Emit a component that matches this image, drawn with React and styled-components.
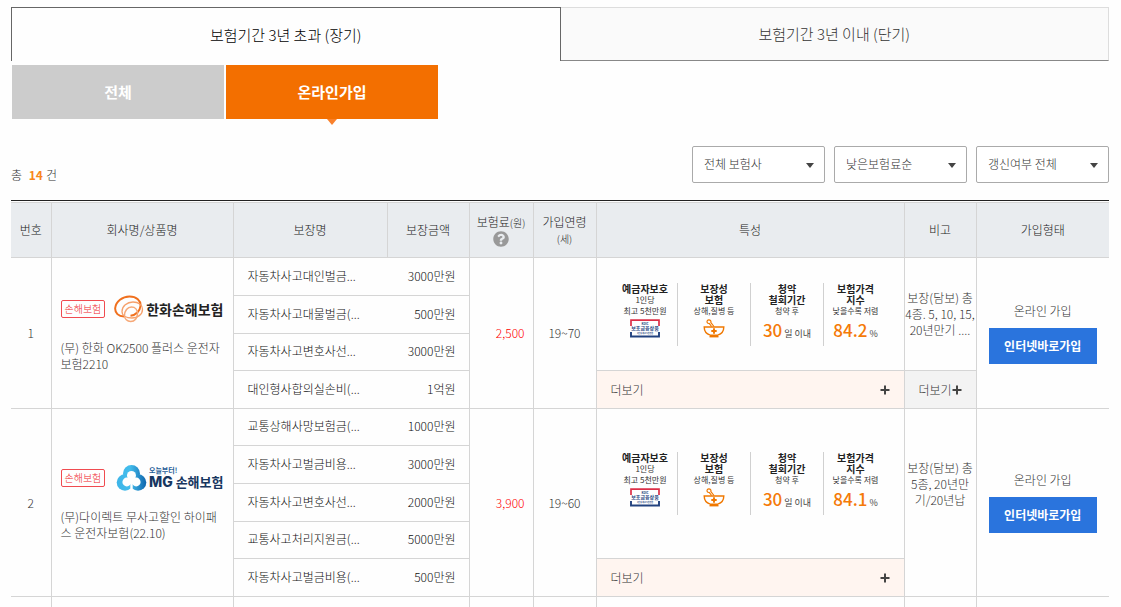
import React from "react";
import styled, { createGlobalStyle } from "styled-components";
import { FaQuestionCircle } from "react-icons/fa";

const products = [
  {
    no: 1,
    logo: "hanwha",
    name: "(무) 한화 OK2500 플러스 운전자보험2210",
    coverages: [
      ["자동차사고대인벌금...", "3000만원"],
      ["자동차사고대물벌금(...", "500만원"],
      ["자동차사고변호사선...", "3000만원"],
      ["대인형사합의실손비(...", "1억원"],
    ],
    price: "2,500",
    age: "19~70",
    index: "84.2",
    note: "보장(담보) 총\n4종. 5, 10, 15,\n20년만기 ....",
    noteMore: true,
  },
  {
    no: 2,
    logo: "mg",
    name: "(무)다이렉트 무사고할인 하이패스 운전자보험(22.10)",
    coverages: [
      ["교통상해사망보험금(...", "1000만원"],
      ["자동차사고벌금비용...", "3000만원"],
      ["자동차사고변호사선...", "2000만원"],
      ["교통사고처리지원금(...", "5000만원"],
      ["자동차사고벌금비용(...", "500만원"],
    ],
    price: "3,900",
    age: "19~60",
    index: "84.1",
    note: "보장(담보) 총\n5종, 20년만\n기/20년납",
    noteMore: false,
  },
];

const filters = [
  { label: "보험사", value: "전체 보험사" },
  { label: "정렬", value: "낮은보험료순" },
  { label: "갱신여부", value: "갱신여부 전체" },
];

const HanwhaLogo = () => (
  <Logo>
    <svg width="30" height="28" viewBox="0 0 30 28" fill="none">
      <path
        d="M10 21.500C4.500 21.500.8 18 1.200 13 1.800 6.500 8.500 1.500 15.500 1.500 22.500 1.500 27 5.500 26.500 11c-.5 5-4.500 9-10 9.800"
        stroke="#f0701e"
        strokeWidth="2"
      />
      <path
        d="M8 16.500C8 11 13 7 19 7c5.500 0 9.500 3 9.500 7.500 0 5-5 8.500-10.500 8.500C12 23 8 20.500 8 16.500z"
        stroke="#f6a06a"
        strokeWidth="1.300"
      />
      <path
        d="M10.500 20.500c0-4.500 3-8.500 7-8.500 3.800 0 6 3 6 6.500 0 4.500-2.800 8-6.800 8-3.500 0-6.200-2.500-6.200-6z"
        stroke="#f6a877"
        strokeWidth="1.500"
      />
    </svg>
    <LogoName>한화손해보험</LogoName>
  </Logo>
);

const MgLogo = () => (
  <Logo>
    <svg width="31" height="28" viewBox="0 0 31 28">
      <defs>
        <linearGradient id="mg" x1="0" y1="0" x2="31" y2="0" gradientUnits="userSpaceOnUse">
          <stop offset="0" stopColor="#3db4e8" />
          <stop offset="0.450" stopColor="#43bdec" />
          <stop offset="1" stopColor="#0c62ab" />
        </linearGradient>
      </defs>
      <g fill="url(#mg)">
        <circle cx="15.500" cy="9.500" r="8.500" />
        <circle cx="9" cy="18.500" r="8.300" />
        <circle cx="22" cy="18.500" r="8.300" />
      </g>
      <g fill="#fefefe">
        <circle cx="15.500" cy="11.500" r="4.500" />
        <circle cx="10.800" cy="18" r="4.400" />
        <circle cx="20.200" cy="18" r="4.400" />
        <path d="M12 13h7v7h-7z" />
        <path d="M14.300 18h2.400v10h-2.400z" />
      </g>
    </svg>
    <MgName>
      <small>오늘부터!</small>
      <LogoName $size="13px" $color="#17365f">
        <b>MG</b> 손해보험
      </LogoName>
    </MgName>
  </Logo>
);

const DepositMark = () => (
  <svg width="30" height="19" viewBox="0 0 30 19">
    <path d="M1 7V1.200h28V7" fill="none" stroke="#dc3048" strokeWidth="1.700" />
    <path d="M1 13v4.500h28V13" fill="none" stroke="#22427f" strokeWidth="1.900" />
    <g
      fill="#22427f"
      textAnchor="middle"
      fontFamily="Noto Sans CJK KR, sans-serif"
      fontWeight="700"
    >
      <text x="15" y="6" fontSize="3">
        KDIC
      </text>
      <text x="15" y="11" fontSize="5">
        보호금융상품
      </text>
      <text x="15" y="14.500" fontSize="2">
        1인당 최고 5천만원
      </text>
    </g>
  </svg>
);

const BowlIcon = () => (
  <svg width="22" height="19" viewBox="0 0 22 19" fill="none" stroke="#f07800">
    <path d="M1.200 8h19.600c0 4-2.500 7-6 8.200H7.200C3.700 15 1.200 12 1.200 8z" strokeWidth="1.400" />
    <path d="M6.500 17.700h9" strokeWidth="1.400" />
    <path
      d="M11 7.500 7.900 3.600C8.300 2.200 7.300.8 5.900.8 4.400.8 3.600 2.300 4.200 3.500c.4.800 1.200 1.100 2 1l2.400 3"
      strokeWidth="1.200"
    />
    <path d="M11 9.300v5.400M8.300 12h5.400" strokeWidth="1.900" />
  </svg>
);

const Features = ({ index }) => (
  <FeatureList>
    <Feature>
      <strong>예금자보호</strong>
      <span>1인당</span>
      <span>최고 5천만원</span>
      <Mark>
        <DepositMark />
      </Mark>
    </Feature>
    <Feature>
      <strong>
        보장성
        <br />
        보험
      </strong>
      <span>상해,질병 등</span>
      <Mark>
        <BowlIcon />
      </Mark>
    </Feature>
    <Feature>
      <strong>
        청약
        <br />
        철회기간
      </strong>
      <span>청약 후</span>
      <Figure>
        30<small>일 이내</small>
      </Figure>
    </Feature>
    <Feature>
      <strong>
        보험가격
        <br />
        지수
      </strong>
      <span>낮을수록 저렴</span>
      <Figure>
        {index}
        <small>%</small>
      </Figure>
    </Feature>
  </FeatureList>
);

const PlusIcon = () => (
  <svg width="10" height="10" viewBox="0 0 10 10" stroke="#444" strokeWidth="2">
    <path d="M5 0.500v9M0.500 5h9" />
  </svg>
);

const ProductRows = ({ product }) => {
  const count = product.coverages.length;
  return product.coverages.map(([title, amount], i) => {
    const first = i === 0;
    const last = i === count - 1;
    return (
      <tr key={i}>
        {first && (
          <>
            <NumberCell rowSpan={count}>{product.no}</NumberCell>
            <CompanyCell rowSpan={count}>
              <CompanyHead>
                <Badge>손해보험</Badge>
                {product.logo === "mg" ? <MgLogo /> : <HanwhaLogo />}
              </CompanyHead>
              <p>{product.name}</p>
            </CompanyCell>
          </>
        )}
        <CoverageName>{title}</CoverageName>
        <CoverageAmount>{amount}</CoverageAmount>
        {first && (
          <>
            <PriceCell rowSpan={count}>{product.price}</PriceCell>
            <Cell rowSpan={count}>{product.age}</Cell>
            <Cell rowSpan={count - 1}>
              <Features index={product.index} />
            </Cell>
            <NoteCell
              rowSpan={product.noteMore ? count - 1 : count}
              $full={!product.noteMore}
            >
              {product.note}
            </NoteCell>
            <Cell rowSpan={count}>
              온라인 가입
              <JoinLink href="#join">인터넷바로가입</JoinLink>
            </Cell>
          </>
        )}
        {last && (
          <MoreCell $bg="#fff5f0">
            <MoreButton $wide>
              더보기
              <PlusIcon />
            </MoreButton>
          </MoreCell>
        )}
        {last && product.noteMore && (
          <MoreCell $bg="#f3f3f3">
            <MoreButton>
              더보기
              <PlusIcon />
            </MoreButton>
          </MoreCell>
        )}
      </tr>
    );
  });
};

const App = () => {
  return (
    <Page>
      <GlobalStyle />
      <PeriodTabs>
        <PeriodTab $active>보험기간 3년 초과 (장기)</PeriodTab>
        <PeriodTab>보험기간 3년 이내 (단기)</PeriodTab>
      </PeriodTabs>
      <JoinTabs>
        <JoinTab>전체</JoinTab>
        <JoinTab $active>온라인가입</JoinTab>
      </JoinTabs>

      <Toolbar>
        <Total>
          총 <strong>14</strong>건
        </Total>
        <Filters>
          {filters.map((filter) => (
            <SelectBox key={filter.label}>
              <select aria-label={filter.label}>
                <option>{filter.value}</option>
              </select>
              <svg width="8" height="5" viewBox="0 0 8 5">
                <path d="M0 0h8L4 5z" fill="#444" />
              </svg>
            </SelectBox>
          ))}
        </Filters>
      </Toolbar>

      <TableWrap>
        <Table>
          <colgroup>
            <Col $width="40px" />
            <Col $width="182px" />
            <Col $width="154px" />
            <Col $width="82px" />
            <Col $width="64px" />
            <Col $width="63px" />
            <Col />
            <Col $width="72px" />
            <Col $width="133px" />
          </colgroup>
          <thead>
            <tr>
              <th>번호</th>
              <th>회사명/상품명</th>
              <th>보장명</th>
              <th>보장금액</th>
              <th>
                보험료<small>(원)</small>
                <HelpButton aria-label="보험료 도움말">
                  <FaQuestionCircle />
                </HelpButton>
              </th>
              <th>
                가입연령
                <br />
                <small>(세)</small>
              </th>
              <th>특성</th>
              <th>비고</th>
              <th>가입형태</th>
            </tr>
          </thead>
          <tbody>
            {products.map((product) => (
              <ProductRows key={product.no} product={product} />
            ))}
            <NextRow>
              <NumberCell />
              <Cell />
              <Cell colSpan={2} />
              <Cell />
              <Cell />
              <Cell />
              <Cell />
              <Cell />
            </NextRow>
          </tbody>
        </Table>
      </TableWrap>
    </Page>
  );
};

export default App;

const GlobalStyle = createGlobalStyle`
  * {
    box-sizing: border-box;
  }
  body {
    margin: 0;
    background: #fefefe;
  }
  body,
  button,
  select {
    font-family: "Noto Sans CJK KR", "Noto Sans", sans-serif;
    font-size: 12px;
    font-weight: 300;
    line-height: 16px;
    color: #333;
  }
  button {
    padding: 0;
    border: none;
    background: none;
    cursor: pointer;
  }
`;

const Page = styled.main`
  padding: 7px 12px 0 11px;
`;

const PeriodTabs = styled.div`
  display: flex;
`;

const PeriodTab = styled.button`
  flex: 1;
  height: 54px;
  font-size: 15px;
  color: ${({ $active }) => ($active ? "#000" : "#333")};
  background: ${({ $active }) => ($active ? "#fefefe" : "#fafafa")};
  border: 1px solid ${({ $active }) => ($active ? "#666" : "#ddd")};
  border-bottom: ${({ $active }) => ($active ? "none" : "1px solid #888")};
  border-left-width: ${({ $active }) => ($active ? "1px" : "0")};
`;

const JoinTabs = styled.div`
  display: flex;
  gap: 2px;
  margin: 4px 0 0 1px;
`;

const JoinTab = styled.button`
  position: relative;
  width: 212px;
  height: 54px;
  font-size: 15px;
  font-weight: 700;
  color: #fff;
  background: ${({ $active }) => ($active ? "#f36f00" : "#ccc")};

  &::after {
    content: "";
    display: ${({ $active }) => ($active ? "block" : "none")};
    position: absolute;
    top: 100%;
    left: 50%;
    margin-left: -5px;
    border: 5px solid transparent;
    border-top: 6px solid #f9802b;
    border-bottom: none;
  }
`;

const Toolbar = styled.div`
  display: flex;
  justify-content: space-between;
  align-items: flex-end;
  margin: 27px 0 17px;
`;

const Total = styled.p`
  margin: 0;

  strong {
    margin-left: 4px;
    margin-right: 3px;
    font-weight: 700;
    color: #f8861b;
  }
`;

const Filters = styled.div`
  display: flex;
  gap: 9px;
`;

const SelectBox = styled.div`
  position: relative;
  width: 133px;

  select {
    appearance: none;
    width: 100%;
    height: 37px;
    padding: 0 24px 2px 11px;
    border: 1px solid #aaa;
    border-radius: 2px;
    background: #fff;
  }
  svg {
    position: absolute;
    top: 17px;
    right: 11px;
    pointer-events: none;
  }
`;

const TableWrap = styled.div`
  border-top: 1px solid #222;
  padding-top: 1px;
`;

const Table = styled.table`
  width: 100%;
  table-layout: fixed;
  border-collapse: collapse;

  th,
  td {
    padding: 0;
    border: 1px solid #d5d5d5;
  }
  th:first-child {
    border-left: none;
  }
  th:last-child,
  td:last-child {
    border-right: none;
  }
  th {
    height: 55px;
    font-weight: 300;
    color: #222;
    background: #e9ecef;
  }
  small {
    font-size: 10px;
  }
  tbody tr {
    height: 38px;
  }
  tbody tr:nth-child(5n),
  tbody tr:nth-child(5n + 3) {
    height: 37px;
  }
`;

const Col = styled.col`
  width: ${({ $width }) => $width || "auto"};
`;

const HelpButton = styled.button`
  display: block;
  margin: 0 auto;
  font-size: 16px;
  height: 16px;
  color: #999;

  svg {
    display: block;
  }
`;

const Cell = styled.td`
  text-align: center;
`;

const NumberCell = styled(Cell)`
  && {
    border-left: none;
  }
`;

const NoteCell = styled(Cell)`
  && {
    padding-bottom: ${({ $full }) => ($full ? "38px" : "0")};
  }
  white-space: pre;
`;

const CompanyCell = styled.td`
  && {
    padding: 0 9px;
  }
  p {
    margin: 17px 0 0;
    word-break: break-all;
  }
`;

const CompanyHead = styled.div`
  display: flex;
  align-items: center;
  justify-content: space-between;
  height: 28px;
`;

const Badge = styled.span`
  padding: 0 3px;
  border: 1px solid #f04b50;
  border-radius: 2px;
  font-size: 10px;
  white-space: nowrap;
  color: #f0262c;
`;

const Logo = styled.span`
  display: flex;
  align-items: center;
  gap: 2px;
`;

const LogoName = styled.span`
  font-size: ${({ $size }) => $size || "14px"};
  font-weight: 700;
  white-space: nowrap;
  color: ${({ $color }) => $color || "#222"};

  b {
    font-family: Inter, sans-serif;
    font-size: 14px;
    font-weight: 800;
  }
`;

const MgName = styled.span`
  display: flex;
  flex-direction: column;

  small {
    font-size: 7px;
    font-weight: 700;
    line-height: 8px;
    color: #1f5c96;
  }
`;

const CoverageName = styled.td`
  && {
    padding-left: 14px;
    padding-bottom: 2px;
    border-right: none;
    color: #111;
  }
`;

const CoverageAmount = styled.td`
  && {
    padding-right: 13px;
    padding-bottom: 2px;
    border-left: none;
    color: #111;
  }
  text-align: right;
`;

const PriceCell = styled.td`
  && {
    padding-right: 8px;
  }
  text-align: right;
  color: #ff0000;
`;

const FeatureList = styled.div`
  display: grid;
  grid-template-columns: 64px 73px 73px 64px;
  justify-content: center;
`;

const Feature = styled.div`
  display: flex;
  flex-direction: column;
  align-items: center;
  height: 63px;
  line-height: 11px;
  text-align: center;

  & + & {
    border-left: 1px solid #d0d0d0;
  }
  strong {
    font-size: 10px;
    font-weight: 700;
    color: #222;
  }
  span {
    font-size: 8px;
    font-weight: 400;
    white-space: nowrap;
    color: #333;
  }
`;

const Mark = styled.div`
  display: flex;
  margin-top: 3px;
`;

const Figure = styled.div`
  display: flex;
  align-items: baseline;
  gap: 2px;
  margin-top: 3px;
  font-size: 17px;
  font-weight: 500;
  line-height: 22px;
  color: #f57a08;

  small {
    font-size: 9px;
    font-weight: 400;
    color: #444;
  }
`;

const JoinLink = styled.a`
  display: block;
  width: 108px;
  margin: 9px auto 0;
  line-height: 36px;
  font-weight: 700;
  color: #fff;
  background: #2a74dd;
  text-decoration: none;
`;

const MoreCell = styled.td`
  background: ${({ $bg }) => $bg};
`;

const MoreButton = styled.button`
  display: flex;
  align-items: center;
  justify-content: ${({ $wide }) => ($wide ? "space-between" : "center")};
  width: 100%;
  padding: ${({ $wide }) => ($wide ? "0 14px" : "0")};
`;

const NextRow = styled.tr`
  && {
    height: 10px;
  }
  && td {
    border-bottom: none;
  }
`;
